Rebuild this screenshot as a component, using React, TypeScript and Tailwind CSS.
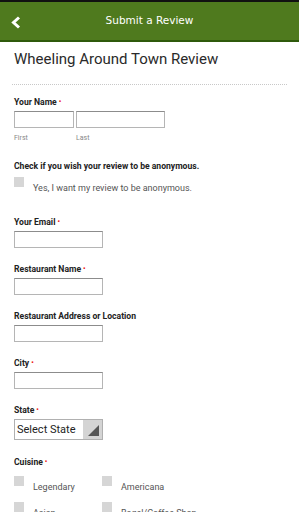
import React from "react";

const Label = ({ children, mt, req }: { children: React.ReactNode; mt: string; req?: boolean }) => (
  <div className={`${mt} h-[12px] leading-[12px] text-[8.6px] font-bold text-[#222] flex items-center`}>
    <span>{children}</span>
    {req && <span className="text-[#e11] text-[7px] ml-[2px]">•</span>}
  </div>
);

const Input = ({ w, mt }: { w: string; mt: string }) => (
  <div className={`${w} ${mt} h-[17px] border border-[#b5b5b5] border-t-[#8c8c8c] bg-white`} />
);

const Check = ({ label, w }: { label: string; w?: string }) => (
  <div className={`flex ${w ?? ""}`}>
    <div className="w-[10px] h-[10px] bg-[#d6d6d6] shrink-0" />
    <div className="ml-[9px] mt-[5px] text-[9px] leading-[12px] text-[#555] whitespace-nowrap">{label}</div>
  </div>
);

export default function App() {
  return (
    <div
      className="w-[299px] h-[512px] overflow-hidden bg-white"
      style={{ fontFamily: "Roboto, 'Noto Sans', sans-serif" }}
    >
      <div className="h-[2px] bg-[#111]" />
      <div className="relative h-[40px] bg-[#4f7a1e] border-b-[2px] border-[#2f5a0c] flex items-center justify-center">
        <svg className="absolute left-[11px] top-[14px]" width="10" height="13" viewBox="0 0 10 13">
          <path d="M8 1.5 L2.5 6.5 L8 11.5" stroke="white" strokeWidth="3" fill="none" strokeLinejoin="miter" />
        </svg>
        <span
          className="text-white text-[10.5px]"
          style={{ fontFamily: "'Comic Sans MS', 'DejaVu Sans', sans-serif" }}
        >
          Submit a Review
        </span>
      </div>
      <div className="px-[14px]">
        <div className="mt-[7px] h-[20px] leading-[20px] text-[15px] text-[#2a2a2a]">Wheeling Around Town Review</div>
        <div className="mt-[15px] -mx-[2px] border-t border-dotted border-[#c8c8c8]" />
        <Label mt="mt-[11px]" req>Your Name</Label>
        <div className="flex gap-[2px] mt-[3px]">
          <Input w="w-[60px]" mt="mt-0" />
          <Input w="w-[89px]" mt="mt-0" />
        </div>
        <div className="flex mt-[5px] h-[10px] leading-[10px] text-[7px] text-[#888]">
          <span className="w-[62px]">First</span>
          <span>Last</span>
        </div>
        <Label mt="mt-[17px]">Check if you wish your review to be anonymous.</Label>
        <div className="mt-[5px]">
          <Check label="Yes, I want my review to be anonymous." />
        </div>
        <Label mt="mt-[22px]" req>Your Email</Label>
        <Input w="w-[89px]" mt="mt-[3px]" />
        <Label mt="mt-[15px]" req>Restaurant Name</Label>
        <Input w="w-[89px]" mt="mt-[3px]" />
        <Label mt="mt-[15px]">Restaurant Address or Location</Label>
        <Input w="w-[89px]" mt="mt-[3px]" />
        <Label mt="mt-[15px]" req>City</Label>
        <Input w="w-[89px]" mt="mt-[3px]" />
        <Label mt="mt-[15px]" req>State</Label>
        <div className="mt-[3px] w-[89px] h-[21px] border border-[#b0b0b0] flex">
          <div className="flex-1 text-[11px] leading-[19px] pl-[2px] text-[#222]">Select State</div>
          <div className="w-[19px] bg-[#d4d4d4] relative">
            <div
              className="absolute right-[3px] bottom-[3px] w-[11px] h-[11px] bg-[#555]"
              style={{ clipPath: "polygon(100% 0, 100% 100%, 0 100%)" }}
            />
          </div>
        </div>
        <Label mt="mt-[16px]" req>Cuisine</Label>
        <div className="mt-[8px] flex">
          <Check label="Legendary" w="w-[88px]" />
          <Check label="Americana" />
        </div>
        <div className="mt-[9px] flex">
          <Check label="Asian" w="w-[88px]" />
          <Check label="Bagel/Coffee Shop" />
        </div>
      </div>
    </div>
  );
}
